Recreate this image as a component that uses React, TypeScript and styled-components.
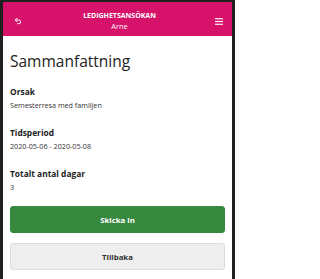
import React from "react";
import styled, { createGlobalStyle } from "styled-components";

const Global = createGlobalStyle`
  html, body { margin: 0; padding: 0; background: #ffffff; }
  body { font-family: "Open Sans", "Noto Sans", sans-serif; color: #222; }
`;

const Frame = styled.div`
  width: 229px;
  height: 277px;
  border-left: 3px solid #1f1f1f;
  border-right: 3px solid #1f1f1f;
  border-top: 2px solid #1f1f1f;
  background: #fff;
  display: flex;
  flex-direction: column;
  overflow: hidden;
`;

const Header = styled.header`
  height: 30px;
  padding-top: 4px;
  background: #d6126a;
  display: grid;
  grid-template-columns: 30px 1fr 26px;
  align-items: center;
  color: #fff;
`;

const IconButton = styled.div`
  display: flex;
  align-items: center;
  justify-content: center;
  height: 100%;
`;

const TitleBlock = styled.div`
  display: flex;
  flex-direction: column;
  align-items: center;
  line-height: 11px;
  margin-top: -1px;
`;

const Title = styled.div`
  font-size: 7px;
  font-weight: 700;
`;

const Subtitle = styled.div`
  font-size: 7.5px;
  font-weight: 400;
`;

const Content = styled.main`
  padding: 13px 7px 0 7px;
  display: flex;
  flex-direction: column;
`;

const Heading = styled.h1`
  margin: 0 0 12px 0;
  font-size: 15.5px;
  font-weight: 400;
  line-height: 24px;
  color: #222;
`;

const Field = styled.section`
  display: flex;
  flex-direction: column;
  margin-bottom: 14px;
  &:last-of-type { margin-bottom: 12px; }
`;

const Label = styled.div`
  font-size: 8.4px;
  font-weight: 700;
  line-height: 13px;
  color: #222;
`;

const Value = styled.div`
  font-size: 7.2px;
  line-height: 13px;
  margin-top: 1px;
  color: #333;
`;

const Button = styled.button<{ $primary?: boolean }>`
  height: 27px;
  width: 100%;
  border-radius: 3px;
  border: 1px solid ${(p) => (p.$primary ? "#37893f" : "#dcdcdc")};
  background: ${(p) => (p.$primary ? "#37893f" : "#eeeeee")};
  color: ${(p) => (p.$primary ? "#ffffff" : "#333333")};
  font-family: "Open Sans", "Noto Sans", sans-serif;
  font-size: 7.8px;
  font-weight: 700;
  padding: 0;
  margin-bottom: ${(p) => (p.$primary ? "10px" : "0")};
`;

export default function App() {
  return (
    <>
      <Global />
      <Frame>
        <Header>
          <IconButton>
            <svg width="8" height="8" viewBox="0 0 24 24" fill="none" stroke="#fff" strokeWidth="3" strokeLinecap="round" strokeLinejoin="round">
              <path d="M9 14 4 9l5-5" />
              <path d="M4 9h10.5a5.5 5.5 0 0 1 5.5 5.5 5.5 5.5 0 0 1-5.5 5.5H11" />
            </svg>
          </IconButton>
          <TitleBlock>
            <Title>LEDIGHETSANSÖKAN</Title>
            <Subtitle>Arne</Subtitle>
          </TitleBlock>
          <IconButton>
            <svg width="8.5" height="7" viewBox="0 0 9 7" fill="#fff">
              <rect x="0" y="0" width="9" height="1.2" />
              <rect x="0" y="2.9" width="9" height="1.2" />
              <rect x="0" y="5.8" width="9" height="1.2" />
            </svg>
          </IconButton>
        </Header>
        <Content>
          <Heading>Sammanfattning</Heading>
          <Field>
            <Label>Orsak</Label>
            <Value>Semesterresa med familjen</Value>
          </Field>
          <Field>
            <Label>Tidsperiod</Label>
            <Value>2020-05-06 - 2020-05-08</Value>
          </Field>
          <Field>
            <Label>Totalt antal dagar</Label>
            <Value>3</Value>
          </Field>
          <Button $primary>Skicka in</Button>
          <Button>Tillbaka</Button>
        </Content>
      </Frame>
    </>
  );
}
